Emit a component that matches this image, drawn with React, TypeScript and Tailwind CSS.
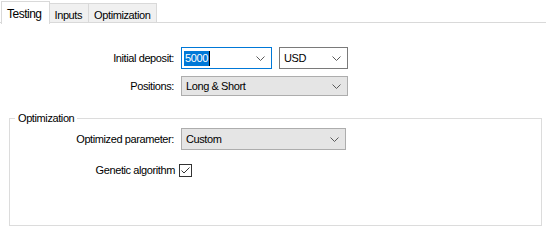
const Chevron = ({ color = "#5a5a5a" }: { color?: string }) => (
  <svg width="9" height="5" viewBox="0 0 9 5" className="shrink-0">
    <path d="M0.5 0.5 L4.5 4.5 L8.5 0.5" fill="none" stroke={color} strokeWidth="1" />
  </svg>
);

const Select = ({
  value,
  className,
}: {
  value: string;
  className: string;
}) => (
  <div
    className={`flex items-center justify-between pl-[4px] pr-[6px] ${className}`}
  >
    <span>{value}</span>
    <Chevron />
  </div>
);

const Row = ({
  label,
  labelWidth,
  children,
  className = "",
}: {
  label: string;
  labelWidth: string;
  children: React.ReactNode;
  className?: string;
}) => (
  <div className={`flex items-center ${className}`}>
    <div className={`${labelWidth} text-right pr-[4px] shrink-0`}>{label}</div>
    {children}
  </div>
);

export default function App() {
  const tabs = ["Testing", "Inputs", "Optimization"];

  return (
    <div
      className="w-[546px] h-[241px] bg-white text-[11px] tracking-[-0.4px] text-black overflow-hidden"
      style={{ fontFamily: '"Liberation Sans", Arial, sans-serif' }}
    >
      {/* tab strip */}
      <div className="flex h-[23px] pl-[1px] border-b border-[#d9d9d9]">
        {tabs.map((tab, i) =>
          i === 0 ? (
            <div
              key={tab}
              className="relative -mb-px mt-[1px] h-[23px] pl-[5px] pr-[7px] pt-[3px] bg-white border border-b-0 border-[#d9d9d9] text-[12px] tracking-[-0.5px] z-10"
            >
              {tab}
            </div>
          ) : (
            <div
              key={tab}
              className="mt-[3px] h-[19px] pl-[5px] pr-[6px] pt-[3px] bg-[#f0f0f0] border border-l-0 border-b-0 border-[#d9d9d9]"
            >
              {tab}
            </div>
          )
        )}
      </div>

      {/* top form */}
      <div className="flex flex-col gap-[7px] pt-[24px]">
        <Row label="Initial deposit:" labelWidth="w-[178px]">
          <div className="flex items-center justify-between w-[91px] h-[22px] border border-[#0078d7] pl-[2px] pr-[6px] ml-[3px]">
            <span className="flex items-center">
              <span className="bg-[#0078d7] text-white leading-[15px] px-[1px]">5000</span>
              <span className="w-px h-[15px] bg-black" />
            </span>
            <Chevron />
          </div>
          <Select
            value="USD"
            className="ml-[7px] w-[69px] h-[22px] border border-[#7a7a7a] bg-white"
          />
        </Row>
        <Row label="Positions:" labelWidth="w-[178px]">
          <Select
            value="Long & Short"
            className="ml-[3px] w-[167px] h-[20px] border border-[#adadad] bg-[#e5e5e5]"
          />
        </Row>
      </div>

      {/* optimization group */}
      <div className="relative mt-[22px] ml-[9px] mr-[4px] h-[108px] border border-[#dcdcdc]">
        <div className="absolute -top-[8px] left-[5px] bg-white px-[3px] leading-[14px]">
          Optimization
        </div>
        <div className="flex flex-col pt-[9px]">
          <Row label="Optimized parameter:" labelWidth="w-[168px]">
            <Select
              value="Custom"
              className="ml-[3px] w-[165px] h-[22px] border border-[#adadad] bg-[#e5e5e5]"
            />
          </Row>
          <Row label="Genetic algorithm" labelWidth="w-[169px]" className="mt-[12px]">
            <div className="w-[13px] h-[13px] border border-[#333] bg-white flex items-center justify-center">
              <svg width="11" height="11" viewBox="0 0 11 11">
                <path d="M1.5 5.5 L4 8 L9.5 2.5" fill="none" stroke="#333" strokeWidth="1" />
              </svg>
            </div>
          </Row>
        </div>
      </div>
    </div>
  );
}
